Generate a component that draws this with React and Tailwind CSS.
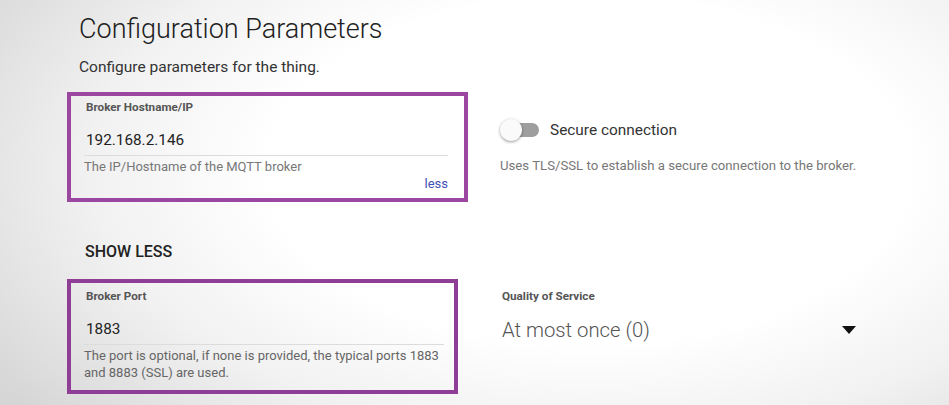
export default function App() {
  return (
    <div className="h-[405px] w-[949px] overflow-hidden bg-[radial-gradient(ellipse_75%_95%_at_62%_42%,#ffffff_45%,#f1f1f1_70%,#d6d6d6_100%)] font-['Roboto',sans-serif] text-[#212121]">
      <div className="pl-[79px] pt-[13px]">
        <h1 className="text-[27px] font-light leading-[32px]">Configuration Parameters</h1>
        <p className="mt-[13px] text-[15.5px] leading-[19px] text-[#333]">
          Configure parameters for the thing.
        </p>
      </div>

      {/* Row 1 */}
      <div className="mt-[15px] flex pl-[67px]">
        <div className="h-[110px] w-[401px] border-4 border-[#9b479f] pl-[13px] pr-[16px]">
          <div className="mt-[4px] pl-[2px] text-[11.7px] font-bold leading-[14px] text-[#555]">
            Broker Hostname/IP
          </div>
          <div className="mt-[16px] border-b border-[#dcdcdc] pb-[5px] pl-[2px] text-[15.3px] leading-[20px] text-[#222]">
            192.168.2.146
          </div>
          <div className="mt-[3px] text-[13px] leading-[16px] text-[#777]">
            The IP/Hostname of the MQTT broker
          </div>
          <div className="mt-[1px] text-right text-[13px] leading-[16px] text-[#3f51b5]">less</div>
        </div>

        <div className="ml-[32px] pt-[26px]">
          <div className="flex items-center">
            <div className="relative h-[24px] w-[40px]">
              <div className="absolute left-[3px] top-[5px] h-[14px] w-[36px] rounded-full bg-[#9e9e9e]" />
              <div className="absolute left-0 top-[1px] h-[22px] w-[22px] rounded-full bg-[#fafafa] shadow-[0_1px_3px_rgba(0,0,0,0.4)]" />
            </div>
            <span className="ml-[10px] text-[15.4px] leading-[20px] text-[#333]">Secure connection</span>
          </div>
          <p className="mt-[16px] text-[13.2px] leading-[16px] text-[#777]">
            Uses TLS/SSL to establish a secure connection to the broker.
          </p>
        </div>
      </div>

      <div className="mt-[41px] pl-[85px] text-[16px] font-medium leading-[18px] text-[#222]">
        SHOW LESS
      </div>

      {/* Row 2 */}
      <div className="mt-[18px] flex pl-[67px]">
        <div className="h-[115px] w-[391px] border-4 border-[#8f3e96] pl-[13px] pr-[10px]">
          <div className="mt-[6px] pl-[2px] text-[11.7px] font-bold leading-[14px] text-[#555]">
            Broker Port
          </div>
          <div className="mt-[16px] border-b border-[#dcdcdc] pb-[5px] pl-[2px] text-[15.3px] leading-[20px] text-[#222]">
            1883
          </div>
          <div className="mt-[2px] text-[13px] leading-[17px] text-[#666]">
            The port is optional, if none is provided, the typical ports 1883 and 8883 (SSL) are used.
          </div>
        </div>

        <div className="ml-[44px] w-[356px] pt-[10px]">
          <div className="text-[11.7px] font-bold leading-[14px] text-[#555]">Quality of Service</div>
          <div className="mt-[14px] flex items-center justify-between">
            <span className="text-[20.3px] font-light leading-[26px] text-[#555]">At most once (0)</span>
            <svg width="14" height="8" viewBox="0 0 14 8" className="mr-[2px]">
              <path d="M0 0h14L7 8z" fill="#111" />
            </svg>
          </div>
        </div>
      </div>
    </div>
  );
}
